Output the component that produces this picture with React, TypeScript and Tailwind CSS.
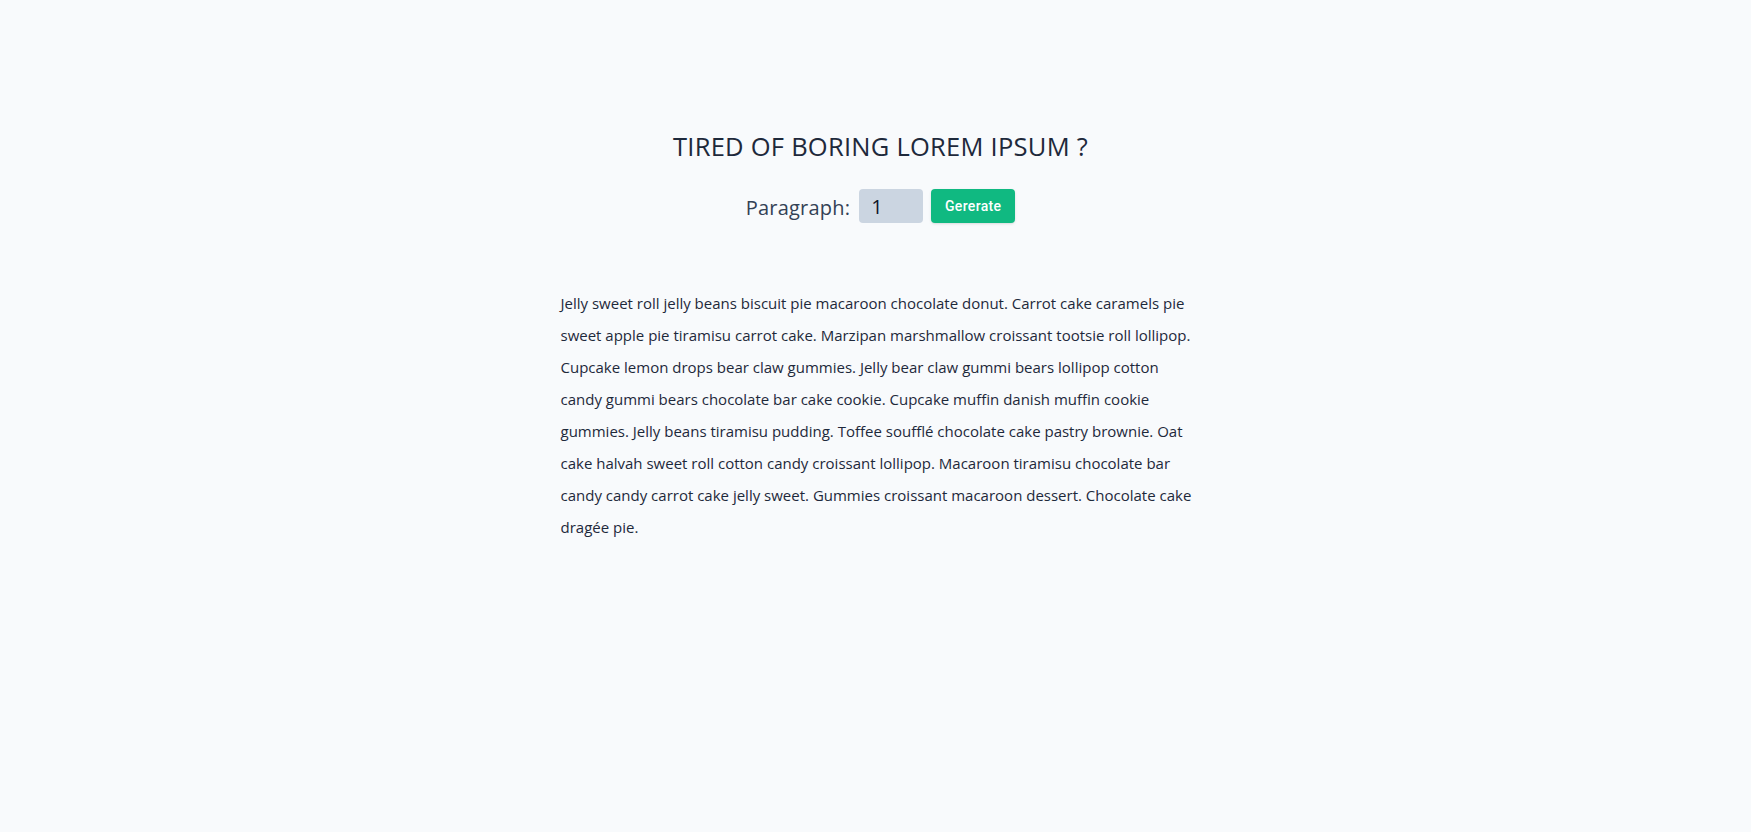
import { useState } from "react";

const TEXT =
    "Jelly sweet roll jelly beans biscuit pie macaroon chocolate donut. Carrot cake caramels pie sweet apple pie tiramisu carrot cake. Marzipan marshmallow croissant tootsie roll lollipop. Cupcake lemon drops bear claw gummies. Jelly bear claw gummi bears lollipop cotton candy gummi bears chocolate bar cake cookie. Cupcake muffin danish muffin cookie gummies. Jelly beans tiramisu pudding. Toffee soufflé chocolate cake pastry brownie. Oat cake halvah sweet roll cotton candy croissant lollipop. Macaroon tiramisu chocolate bar candy candy carrot cake jelly sweet. Gummies croissant macaroon dessert. Chocolate cake dragée pie.";

export default function App() {
    const [count, setCount] = useState(1);
    const [paragraphs, setParagraphs] = useState<string[]>([TEXT]);

    return (
        <div className="min-h-[832px] bg-[#f8fafc] font-['Open_Sans',sans-serif] text-[#1e293b]">
            <section className="mx-auto w-[640px] pt-[128px]">
                <h1 className="pl-[10px] text-center text-[25.5px] leading-9 tracking-[0.01em] uppercase">
                    Tired of boring lorem ipsum ?
                </h1>

                {/* Form */}
                <form
                    className="mt-[25px] flex items-center justify-center gap-2 pl-[10px]"
                    onSubmit={(e) => {
                        e.preventDefault();
                        setParagraphs(Array.from({ length: Math.max(1, count) }, () => TEXT));
                    }}
                >
                    <label htmlFor="amount" className="mr-[1px] pt-[4px] text-xl tracking-[0.01em] text-[#334155]">
                        Paragraph:
                    </label>
                    <input
                        id="amount"
                        type="number"
                        value={count}
                        onChange={(e) => setCount(Number(e.target.value))}
                        className="h-[34px] w-16 rounded bg-[#cbd5e1] px-3 text-xl text-[#0f172a] outline-none"
                    />
                    <button
                        type="submit"
                        className="h-[34px] w-[84px] rounded bg-[#10b981] font-['Roboto',sans-serif] text-sm font-medium tracking-wide text-white shadow"
                    >
                        Gererate
                    </button>
                </form>

                <article className="mt-16 -mr-[6px] ml-[5px] text-[15px] leading-8">
                    {paragraphs.map((p, i) => (
                        <p key={i}>{p}</p>
                    ))}
                </article>
            </section>
        </div>
    );
}
